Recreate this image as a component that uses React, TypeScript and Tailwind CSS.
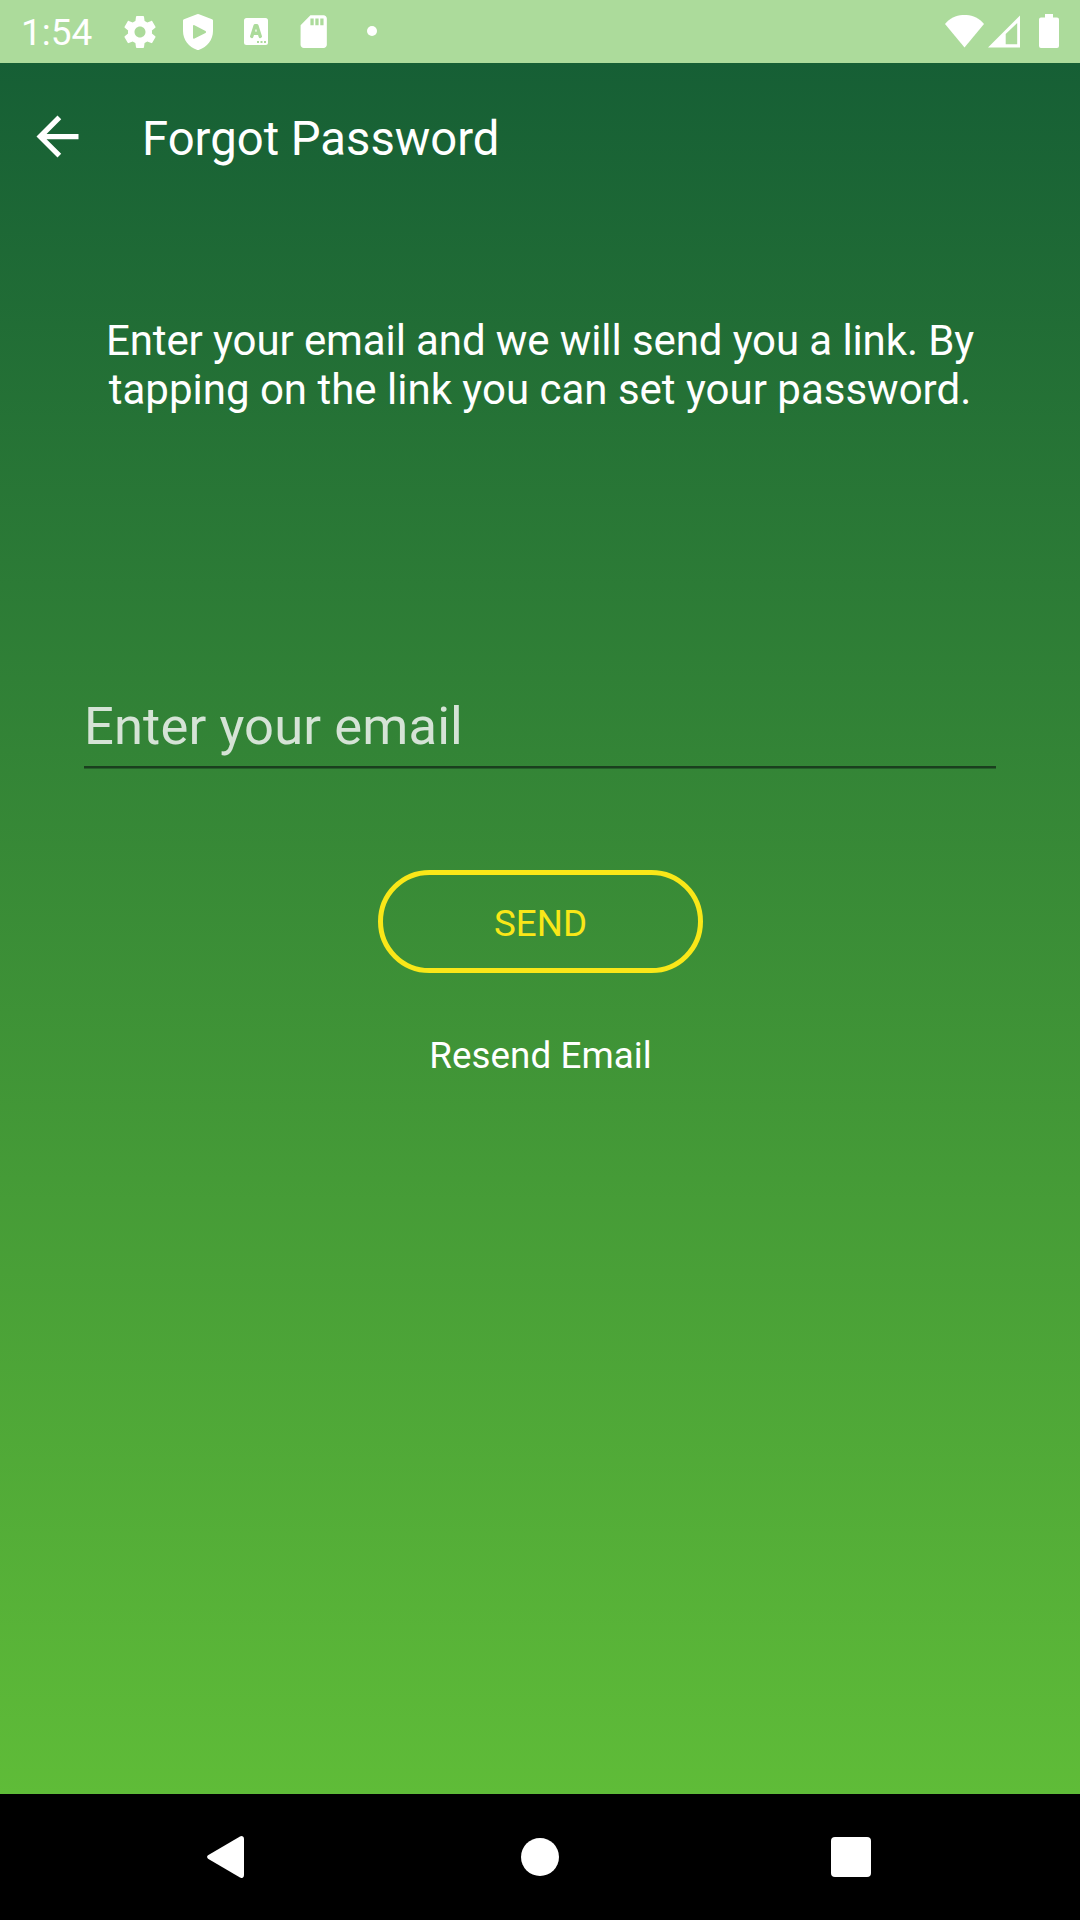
import React from "react";

function GearIcon() {
  return (
    <svg className="size-[40px]" viewBox="0 0 24 24" fill="white">
      <path
        fillRule="evenodd"
        d="M19.14 12.94c.04-.3.06-.61.06-.94 0-.32-.02-.64-.07-.94l2.03-1.58c.18-.14.23-.41.12-.61l-1.92-3.32c-.12-.22-.37-.29-.59-.22l-2.39.96c-.5-.38-1.03-.7-1.62-.94l-.36-2.54c-.04-.24-.24-.41-.48-.41h-3.84c-.24 0-.43.17-.47.41l-.36 2.54c-.59.24-1.13.57-1.62.94l-2.39-.96c-.22-.08-.47 0-.59.22L2.74 8.87c-.12.21-.08.47.12.61l2.03 1.58c-.05.3-.09.63-.09.94s.02.64.07.94l-2.03 1.58c-.18.14-.23.41-.12.61l1.92 3.32c.12.22.37.29.59.22l2.39-.96c.5.38 1.03.7 1.62.94l.36 2.54c.05.24.24.41.48.41h3.84c.24 0 .44-.17.47-.41l.36-2.54c.59-.24 1.13-.56 1.62-.94l2.39.96c.22.08.47 0 .59-.22l1.92-3.32c.12-.22.07-.47-.12-.61l-2.01-1.58zM12 15.3c-1.82 0-3.3-1.48-3.3-3.3s1.48-3.3 3.3-3.3 3.3 1.48 3.3 3.3-1.48 3.3-3.3 3.3z"
      />
    </svg>
  );
}

function ShieldPlayIcon() {
  return (
    <svg className="h-[36px] w-[30px]" viewBox="0 0 30 36" fill="white">
      <path
        fillRule="evenodd"
        d="M14 .3Q15 -.2 16 .3L29 5.2Q30 5.6 30 6.6V17C30 26 24 33 16.2 35.7Q15 36.2 13.8 35.7C6 33 0 26 0 17V6.6Q0 5.6 1 5.2ZM10 12.2V23.6Q10 25.3 11.5 24.6L22.5 18.9Q23.7 18 22.5 17.1L11.5 11.3Q10 10.6 10 12.2Z"
      />
    </svg>
  );
}

function LetterCardIcon() {
  return (
    <div className="flex h-[27px] w-[24px] justify-center rounded-[2.5px] bg-white">
      <svg className="h-[27px] w-[24px]" viewBox="0 0 24 27" fill="none" stroke="#acdb9b">
        <path d="M7.7 18.4L11.2 7.6H12.8L16.3 18.4M9 15.3H15" strokeWidth="3.4" strokeLinejoin="round" strokeLinecap="round" />
        <path d="M13 24H22" strokeWidth="2" strokeDasharray="2 1.5" />
      </svg>
    </div>
  );
}

function SdCardIcon() {
  return (
    <svg className="size-[39.4px]" viewBox="0 0 24 24" fill="white">
      <path d="M18 2h-8L4.02 8 4 20c0 1.1.9 2 2 2h12c1.1 0 2-.9 2-2V4c0-1.100-.9-2-2-2zm-6 6h-2V4h2v4zm3 0h-2V4h2v4zm3 0h-2V4h2v4z" />
    </svg>
  );
}

function StatusBar() {
  return (
    <header className="flex h-[63px] shrink-0 items-center justify-between bg-[#acdb9b]">
      <div className="flex items-center">
        <span className="w-[111px] pl-[21px] pt-[2px] text-[37px] leading-[43px]">1:54</span>
        <span className="flex w-[58px] justify-center"><GearIcon /></span>
        <span className="flex w-[58px] justify-center pt-px"><ShieldPlayIcon /></span>
        <span className="flex w-[58px] justify-center"><LetterCardIcon /></span>
        <span className="flex w-[58px] justify-center"><SdCardIcon /></span>
        <span className="flex w-[58px] justify-center pb-px"><i className="size-[10px] rounded-full bg-white" /></span>
      </div>
      <div className="flex items-center pb-px pr-[21px]">
        <svg className="h-[33px] w-[39px]" viewBox="0 0 39 33" fill="white">
          <path d="M19.500 32.500L0 9C10-3.100 29-3.100 39 9Z" />
        </svg>
        <svg className="ml-[3.500px] h-[33px] w-[32.500px]" viewBox="0 0 32.500 33" fill="white">
          <path fillRule="evenodd" d="M0 32.500L32.500 0V32.500ZM17.700 19V29.200H29.200V8Z" />
        </svg>
        <svg className="ml-[19px] h-[34px] w-[20px]" viewBox="0 0 20 34" fill="white">
          <path d="M6 0H14V3.500H18Q20 3.500 20 5.500V32Q20 34 18 34H2Q0 34 0 32V5.500Q0 3.500 2 3.500H6Z" />
        </svg>
      </div>
    </header>
  );
}

function NavBar() {
  return (
    <nav className="flex h-[126px] shrink-0 items-center bg-black pl-[207px]">
      <svg className="h-[42px] w-[37px]" viewBox="0 0 37 42" fill="white">
        <path d="M1 19.300L33 .4Q34.500-.4 36 .6Q37 1.300 37 3V39Q37 40.700 36 41.400Q34.500 42.400 33 41.600L1 22.700Q-.8 21 1 19.300Z" />
      </svg>
      <i className="ml-[276.500px] size-[38.500px] rounded-full bg-white" />
      <i className="ml-[272px] size-[40px] rounded-[4px] bg-white" />
    </nav>
  );
}

export default function App() {
  return (
    <div className="flex h-[1920px] w-[1080px] flex-col overflow-hidden font-['Roboto',sans-serif] text-white">
      <StatusBar />
      <main className="flex flex-1 flex-col items-center bg-[linear-gradient(180deg,#165f35,#5fbc38)]">
        <div className="flex h-[147px] w-full items-center pl-[26px]">
          <svg className="mt-[-1px] size-[63px]" viewBox="0 0 24 24" fill="white">
            <path d="M20 11H7.830l5.590-5.590L12 4l-8 8 8 8 1.410-1.410L7.830 13H20v-2z" />
          </svg>
          <h1 className="ml-[53px] mt-[5px] text-[47.250px] leading-[56px]">Forgot Password</h1>
        </div>
        <p className="mt-[106px] w-[912px] text-center text-[42px] leading-[49px]">
          <span className="tracking-[-0.1px]">Enter your email and we will send you a link. By</span>{" "}
          tapping on the link you can set your password.
        </p>
        <div className="mt-[281px] h-[73px] w-[912px] border-b-[2px] border-[#1a3f1e] text-[52.500px] leading-[62px] tracking-[0.14px] text-[#d5e3d6] shadow-[0_1px_0_#25602a]">
          Enter your email
        </div>
        <button className="mt-[102px] h-[103px] w-[325px] rounded-full border-[5px] border-[#f9e718] pl-px pt-[4px] text-[36.750px] leading-[43px] text-[#f9e718]">
          SEND
        </button>
        <a className="mt-[61px] pl-px text-[36.750px] leading-[43px] tracking-[0.07px]">Resend Email</a>
      </main>
      <NavBar />
    </div>
  );
}
